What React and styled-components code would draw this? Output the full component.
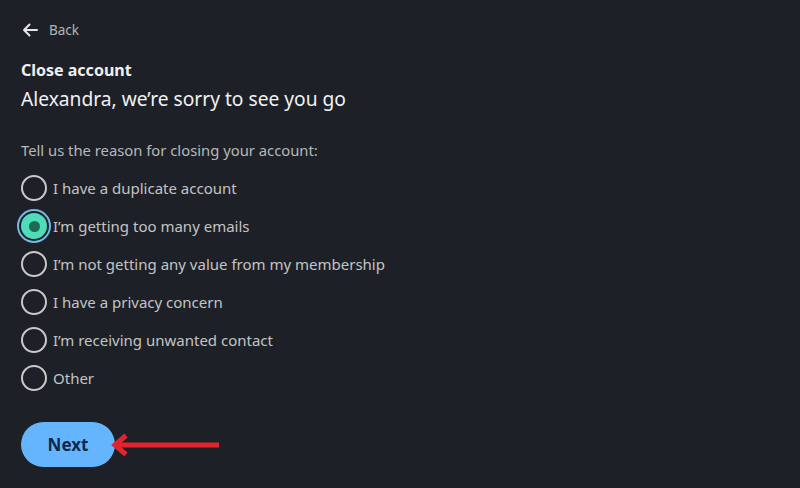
import React, { useState } from "react";
import styled, { createGlobalStyle } from "styled-components";

const GlobalStyle = createGlobalStyle`
  html, body {
    margin: 0;
    padding: 0;
    background: #1d2127;
  }
  body {
    font-family: "Noto Sans", "Open Sans", sans-serif;
  }
`;

const Page = styled.div`
  width: 800px;
  height: 488px;
  box-sizing: border-box;
  padding: 19px 20px 0 21px;
  background: #1d2127;
  color: #e8e8e8;
  overflow: hidden;
`;

const BackLink = styled.button`
  display: flex;
  align-items: center;
  gap: 11px;
  background: none;
  border: none;
  padding: 0 0 0 1px;
  color: #b4b4b4;
  font-family: inherit;
  font-size: 13.5px;
  height: 22px;
  cursor: pointer;
`;

const Heading = styled.h1`
  margin: 17px 0 0;
  font-size: 16px;
  font-weight: 700;
  color: #f0f0f0;
  line-height: 24px;
`;

const SubHeading = styled.h2`
  margin: 3px 0 0;
  font-size: 19.2px;
  font-weight: 400;
  color: #f2f2f2;
  line-height: 28px;
`;

const Prompt = styled.p`
  margin: 26px 0 0;
  font-size: 14.8px;
  color: #b8b8b8;
  line-height: 22px;
`;

const Options = styled.div`
  display: flex;
  flex-direction: column;
  gap: 8px;
  margin-top: 12px;
`;

const Option = styled.label`
  display: flex;
  align-items: center;
  gap: 6px;
  height: 30px;
  font-size: 15px;
  color: #c4c4c4;
  cursor: pointer;
`;

const Radio = styled.span`
  position: relative;
  width: 26px;
  height: 26px;
  flex-shrink: 0;
  box-sizing: border-box;
  border-radius: 50%;
  border: ${(p) => (p.$checked ? "none" : "2px solid #c9c9c9")};
  background: ${(p) => (p.$checked ? "#4fdcb8" : "transparent")};
  box-shadow: ${(p) =>
    p.$checked ? "0 0 0 2px #1d2127, 0 0 0 4px #73b9e6" : "none"};

  &::after {
    content: "";
    display: ${(p) => (p.$checked ? "block" : "none")};
    position: absolute;
    left: 50%;
    top: 50%;
    width: 11px;
    height: 11px;
    margin: -5.5px 0 0 -5.5px;
    border-radius: 50%;
    background: #1d6b55;
  }
`;

const Footer = styled.div`
  display: flex;
  align-items: center;
  margin-top: 29px;
`;

const NextButton = styled.button`
  width: 94px;
  height: 45px;
  border: none;
  border-radius: 23px;
  background: #64b5fd;
  color: #10294a;
  font-family: inherit;
  font-size: 17px;
  font-weight: 700;
  cursor: pointer;
`;

const reasons = [
  "I have a duplicate account",
  "I’m getting too many emails",
  "I’m not getting any value from my membership",
  "I have a privacy concern",
  "I’m receiving unwanted contact",
  "Other",
];

export default function App() {
  const [selected, setSelected] = useState(1);

  return (
    <Page>
      <GlobalStyle />
      <BackLink>
        <svg width="16" height="14" viewBox="0 0 16 14" fill="none">
          <path
            d="M15 7H2M7.5 1.5L2 7l5.5 5.5"
            stroke="#e6e6e6"
            strokeWidth="2"
            strokeLinecap="round"
            strokeLinejoin="round"
          />
        </svg>
        Back
      </BackLink>
      <Heading>Close account</Heading>
      <SubHeading>Alexandra, we’re sorry to see you go</SubHeading>
      <Prompt>Tell us the reason for closing your account:</Prompt>
      <Options>
        {reasons.map((r, i) => (
          <Option key={r} onClick={() => setSelected(i)}>
            <Radio $checked={selected === i} />
            {r}
          </Option>
        ))}
      </Options>
      <Footer>
        <NextButton>Next</NextButton>
        {/* annotation arrow */}
        <svg width="112" height="28" viewBox="0 0 112 28" style={{ marginLeft: -4 }}>
          <path d="M6 14H108" stroke="#e2242d" strokeWidth="5" />
          <path
            d="M15 4.5L4 14l11 9.5"
            stroke="#e2242d"
            strokeWidth="5"
            fill="none"
          />
        </svg>
      </Footer>
    </Page>
  );
}
